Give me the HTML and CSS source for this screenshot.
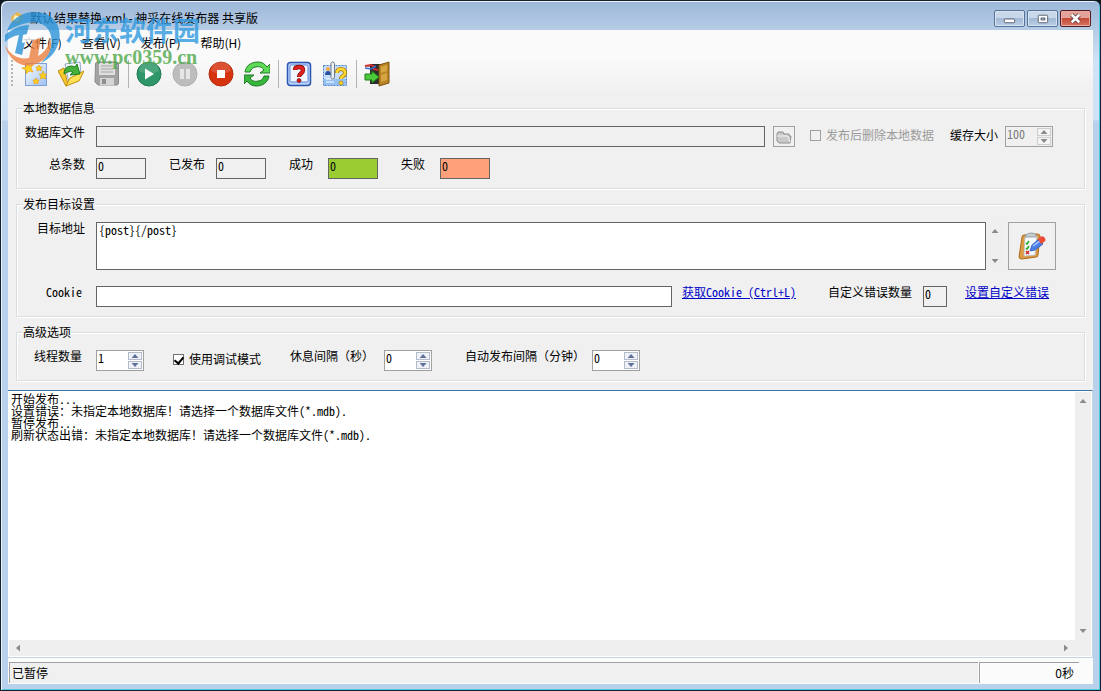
FILE: index.html
```html
<!DOCTYPE html>
<html lang="zh-CN">
<head>
<meta charset="UTF-8">
<meta name="viewport" content="width=device-width, initial-scale=1.0">
<title>默认结果替换.xml - 神采在线发布器 共享版</title>
<link rel="stylesheet" href="styles.css">
</head>
<body>

<div class="window">
    <header class="titlebar">
        <svg class="app-icon" viewBox="0 0 16 16"><path d="M1 7l6-5 7 4-5 8-7-2z" fill="#e8b64c"/><path d="M5 5l5 2-2 5-5-2z" fill="#fff3c0"/></svg>
        <h1>默认结果替换.xml - 神采在线发布器 共享版</h1>
        <div class="window-buttons">
            <button type="button" aria-label="最小化">
                <svg viewBox="0 0 30 16"><rect x="9.500" y="8.500" width="11" height="4" rx="1" fill="#fff" stroke="#555c6b"/></svg>
            </button>
            <button type="button" aria-label="最大化">
                <svg viewBox="0 0 30 16"><rect x="10.500" y="4.500" width="10" height="8" rx="1" fill="#fff" stroke="#555c6b"/><rect x="13.500" y="7.500" width="4" height="2" fill="#a9bfd9" stroke="#555c6b"/></svg>
            </button>
            <button type="button" class="close" aria-label="关闭">
                <svg viewBox="0 0 30 16"><path d="M11 4l8 8M19 4l-8 8" stroke="#5c3b45" stroke-width="4.600"/><path d="M11 4l8 8M19 4l-8 8" stroke="#fff" stroke-width="2.800"/></svg>
            </button>
        </div>
    </header>

    <div class="client">
        <nav class="menu">
            <button type="button">文件(F)</button>
            <button type="button">查看(V)</button>
            <button type="button">发布(P)</button>
            <button type="button">帮助(H)</button>
        </nav>

        <div class="toolbar">
            <span class="grip"></span>
            <button type="button" aria-label="新建">
                <svg viewBox="0 0 26 26">
                    <defs><linearGradient id="page" x1="0" y1="0" x2="1" y2="1"><stop offset="0" stop-color="#fff"/><stop offset="1" stop-color="#9dc0f5"/></linearGradient></defs>
                    <rect x="3.500" y="2.500" width="21" height="22" fill="url(#page)" stroke="#7d9fd6"/>
                    <g fill="#ffcf1f" stroke="#e09a10" stroke-width=".6">
                        <path d="M5 2l2 3 4-1-2 3 2 4-4-1-3 3v-4L0 7l4-1z"/>
                        <path d="M17 4l1 2h2l-1 2v2l-2-1-2 1V8l-1-2h2z"/>
                        <path d="M21 10l1 3h3l-2 2 1 3-3-1-3 1 1-3-2-2h3z"/>
                        <path d="M14 17l1 2h2l-1 2v2l-2-1-2 1v-2l-1-2h2z"/>
                    </g>
                </svg>
            </button>
            <button type="button" aria-label="打开">
                <svg viewBox="0 0 26 26">
                    <path d="M7 3l15-2 1 13-12 8z" fill="#f4f8ff" stroke="#91a8c8"/>
                    <path d="M0 10l6-3 4 17-2 1z" fill="#f7c92d" stroke="#bd8a12"/>
                    <path d="M8 25l4-8 14-7-5 10z" fill="#ffe052" stroke="#c1900f"/>
                    <path d="M6 13c0-6 5-10 11-7l2-3 3 10-10 1 3-3c-4-1-6 0-9 2z" fill="#45b13b" stroke="#217d20"/>
                </svg>
            </button>
            <button type="button" aria-label="保存" disabled>
                <svg viewBox="0 0 26 26">
                    <path d="M1.500 3q0-2 2-2h19q2 0 2 2v19q0 2-2 2H4l-3-3z" fill="#a3a3a3" stroke="#8b8b8b"/>
                    <rect x="5" y="2" width="16" height="12" fill="#dfdfdf"/>
                    <path d="M7 5h12M7 8h12M7 11h12" stroke="#a5a5a5"/>
                    <rect x="6" y="17" width="14" height="7" fill="#d5d5d5"/>
                    <rect x="8" y="18" width="4" height="5" fill="#8f8f8f"/>
                </svg>
            </button>
            <span class="separator"></span>
            <button type="button" aria-label="开始">
                <svg viewBox="0 0 26 26"><circle cx="13" cy="13" r="12" fill="#2e9668" stroke="#227a53"/><path d="M3 10a10 10 0 0 1 20 0q-10 5-20 0z" fill="#fff" opacity=".15"/><path d="M9 7.500v11l9-5.500z" fill="#fff"/></svg>
            </button>
            <button type="button" aria-label="暂停" disabled>
                <svg viewBox="0 0 26 26"><circle cx="13" cy="13" r="12" fill="#bdbdbd" stroke="#b0b0b0"/><path d="M8 8h4v10H8zM14 8h4v10h-4z" fill="#e6e6e6"/></svg>
            </button>
            <button type="button" aria-label="停止">
                <svg viewBox="0 0 26 26"><circle cx="13" cy="13" r="12" fill="#d6330f" stroke="#b52a0c"/><path d="M3 10a10 10 0 0 1 20 0q-10 5-20 0z" fill="#fff" opacity=".15"/><rect x="9" y="9" width="8" height="8" fill="#fff"/></svg>
            </button>
            <button type="button" aria-label="刷新">
                <svg viewBox="0 0 26 26">
                    <path d="M1 11C2 4 8 1 14 1c4 0 7 2 9 5l3-3v9H16l4-3c-2-3-5-4-8-3-3 0-5 2-6 5z" fill="#5edb56" stroke="#1d7a24"/>
                    <path d="M25 15c-1 7-7 10-13 10-4 0-7-2-9-5l-3 3v-9h10l-4 3c2 3 5 4 8 3 3 0 5-2 6-5z" fill="#38b53c" stroke="#1d7a24"/>
                </svg>
            </button>
            <span class="separator"></span>
            <button type="button" aria-label="帮助">
                <svg viewBox="0 0 26 26">
                    <rect x="1.500" y="1.500" width="23" height="23" rx="3" fill="#b9d2fa" stroke="#2a55b0" stroke-width="1.500"/>
                    <rect x="4" y="4" width="18" height="17" rx="1" fill="#f2f7ff" stroke="#5f8ad8"/>
                    <path d="M9 9q0-3 4-3t4 3q0 2-2 3.500T13 16" fill="none" stroke="#7a0d0d" stroke-width="4.400"/>
                    <path d="M9 9q0-3 4-3t4 3q0 2-2 3.500T13 16" fill="none" stroke="#df2020" stroke-width="3"/>
                    <circle cx="13" cy="19.500" r="2" fill="#d31818" stroke="#7a0d0d" stroke-width=".7"/>
                </svg>
            </button>
            <button type="button" aria-label="关于">
                <svg viewBox="0 0 26 26">
                    <rect x="1.500" y="4.500" width="23" height="20" fill="#c3ddfb" stroke="#4f83c8" stroke-dasharray="2 1"/>
                    <path d="M2 18h22v6H2z" fill="#94c0f2"/>
                    <circle cx="6" cy="8" r="2" fill="#efa944"/><path d="M3 14q0-4 3-4t3 4z" fill="#2851a4"/>
                    <path d="M4 18h8M4 21h8" stroke="#fff"/>
                    <rect x="9" y="1" width="3.500" height="17" rx="1.700" fill="#eef2f6" stroke="#68788c"/>
                    <path d="M15 12q0-4 4-4t4 4q0 2-2 3t-2 3" fill="none" stroke="#a57808" stroke-width="4"/>
                    <path d="M15 12q0-4 4-4t4 4q0 2-2 3t-2 3" fill="none" stroke="#ffd52e" stroke-width="2.600"/>
                    <circle cx="19" cy="22" r="2" fill="#ffd52e" stroke="#a57808" stroke-width=".7"/>
                </svg>
            </button>
            <span class="separator"></span>
            <button type="button" aria-label="退出">
                <svg viewBox="0 0 26 26">
                    <path d="M6 3h12v20H6z" fill="#2b2b2b"/>
                    <path d="M1 5l6-1 4 2M9 8l5 1" stroke="#d23131" stroke-width="2"/><path d="M1 7l6 1 5-3" stroke="#3d6fd0" stroke-width="1.500" fill="none"/>
                    <path d="M15 4l10-3v21l-10 3z" fill="#b88424" stroke="#7d5510"/>
                    <path d="M17 6l6-2v6l-6 2zM17 14l6-2v7l-6 2z" fill="#d6a541"/>
                    <path d="M1 13h7v-3l7 6-7 6v-3H1z" fill="#4fc93c" stroke="#1e7c1a"/>
                </svg>
            </button>
        </div>

        <main>
            <fieldset>
                <legend>本地数据信息</legend>
                <div class="row database-row">
                    <label class="caption" for="dbfile">数据库文件</label>
                    <input type="text" class="field grow" id="dbfile" readonly>
                    <button type="button" class="browse" aria-label="浏览" disabled>
                        <svg viewBox="0 0 16 14"><path d="M1 4l1-2h5l1 2h5v2h2l-1 7H3L1 11z" fill="#c9c9c9" stroke="#8f8f8f"/><path d="M1 6h11l2 6" fill="none" stroke="#f5f5f5"/></svg>
                    </button>
                    <label class="check delete-after disabled"><input type="checkbox" disabled>发布后删除本地数据</label>
                    <label class="cache" for="cache">缓存大小</label>
                    <div class="spinner disabled">
                        <input type="text" id="cache" value="100" disabled>
                        <span class="arrows"><button type="button" class="up" aria-label="增加" disabled></button><button type="button" class="down" aria-label="减少" disabled></button></span>
                    </div>
                </div>
                <div class="row counters">
                    <label class="caption" for="total">总条数</label>
                    <input type="text" class="field count" id="total" value="0" readonly>
                    <label for="published">已发布</label>
                    <input type="text" class="field count" id="published" value="0" readonly>
                    <label class="short" for="success">成功</label>
                    <input type="text" class="field count success" id="success" value="0" readonly>
                    <label class="short" for="failed">失败</label>
                    <input type="text" class="field count failed" id="failed" value="0" readonly>
                </div>
            </fieldset>

            <fieldset>
                <legend>发布目标设置</legend>
                <div class="row">
                    <label class="caption" for="target">目标地址</label>
                    <textarea class="target grow" id="target">{post}{/post}</textarea>
                    <div class="scroll vertical"><i class="up"></i><i class="down"></i></div>
                    <button type="button" class="edit" aria-label="编辑目标">
                        <svg viewBox="0 0 28 28">
                            <path d="M4 5q0-2 2-2l13-1q3 0 3 2l-2 19q0 2-2 2L4 27q-3 0-3-2z" fill="#dc9a45" stroke="#ab6b1d"/>
                            <path d="M7 5l12-1-2 19-11 1z" fill="#f5f9fc" stroke="#b9c4cc" stroke-width=".8"/>
                            <path d="M7 4q2-3 6-3t5 2v2H7z" fill="#c4ccd2" stroke="#8d979e" stroke-width=".8"/>
                            <path d="M8 11l1 1 2-3M8 16l1 1 2-3" stroke="#26a926" stroke-width="1.500" fill="none"/>
                            <path d="M8 19l3 3M11 19l-3 3" stroke="#d32424" stroke-width="1.500"/>
                            <path d="M12 19l2-6 7-6 4 5-8 6z" fill="#4c7ee8" stroke="#2c54b8" stroke-width=".8"/>
                            <path d="M15 14l7-5" stroke="#b0cbff" stroke-width="1.500"/>
                            <path d="M20 7q3-4 6-2 3 3 0 5l-3 2z" fill="#ec4b35"/>
                        </svg>
                    </button>
                </div>
                <div class="row cookie-row">
                    <label class="caption cookie-caption" for="cookie">Cookie</label>
                    <input type="text" class="field grow" id="cookie">
                    <a class="get-cookie" href="#">获取Cookie (Ctrl+L)</a>
                    <label class="error-label" for="errors">自定义错误数量</label>
                    <input type="text" class="field errors" id="errors" value="0" readonly>
                    <a class="set-errors" href="#">设置自定义错误</a>
                </div>
            </fieldset>

            <fieldset>
                <legend>高级选项</legend>
                <div class="row">
                    <label class="caption threads-caption" for="threads">线程数量</label>
                    <div class="spinner">
                        <input type="text" id="threads" value="1">
                        <span class="arrows"><button type="button" class="up" aria-label="增加"></button><button type="button" class="down" aria-label="减少"></button></span>
                    </div>
                    <label class="check debug"><input type="checkbox" checked>使用调试模式</label>
                    <label class="rest-label" for="rest">休息间隔（秒）</label>
                    <div class="spinner">
                        <input type="text" id="rest" value="0">
                        <span class="arrows"><button type="button" class="up" aria-label="增加"></button><button type="button" class="down" aria-label="减少"></button></span>
                    </div>
                    <label class="auto-label" for="auto">自动发布间隔（分钟）</label>
                    <div class="spinner">
                        <input type="text" id="auto" value="0">
                        <span class="arrows"><button type="button" class="up" aria-label="增加"></button><button type="button" class="down" aria-label="减少"></button></span>
                    </div>
                </div>
            </fieldset>
        </main>

        <section class="log">
            <textarea aria-label="日志" readonly>开始发布...
设置错误：未指定本地数据库！请选择一个数据库文件(*.mdb).
暂停发布...
刷新状态出错：未指定本地数据库！请选择一个数据库文件(*.mdb).</textarea>
            <div class="scroll vertical"><i class="up"></i><i class="down"></i></div>
            <div class="scroll horizontal"><i class="left"></i><i class="right"></i></div>
            <div class="scroll"></div>
        </section>

        <footer class="status">
            <span class="state">已暂停</span>
            <span class="elapsed">0秒</span>
        </footer>
    </div>

    <div class="watermark">
        <svg viewBox="0 0 56 56">
            <path d="M2 20C6 6 22-2 38 2c12 3 19 15 16 28-2 10-9 18-18 22 8-8 12-18 10-27C44 14 33 9 22 12 13 14 6 18 2 20z" fill="#2a93d8"/>
            <path d="M0 24c7-6 16-10 24-10l-7 30-7-2 4-18C8 25 3 28 0 31z" fill="#2a93d8"/>
            <path d="M0 34c5 10 14 15 24 13l4-20 8-2-3 20c7-4 11-10 12-18 4 12-4 24-17 27C15 57 3 48 0 34z" fill="#ee8040"/>
            <path d="M18 24l20-5-2 8-19 5z" fill="#fff"/>
        </svg>
        <div class="watermark-text">
            <strong>河东软件园</strong>
            <span>www.pc0359.cn</span>
        </div>
    </div>
</div>

</body>
</html>
```
FILE: styles.css
```css
* {
    box-sizing: border-box;
}
body {
    margin: 0;
    background: #101820;
    color: #000;
    font: 12px/12px "Noto Sans CJK SC", sans-serif;
}
button, input, textarea {
    font: inherit;
    color: inherit;
    margin: 0;
    border-radius: 0;
}
button {
    padding: 0;
}

/* Window frame */
.window {
    position: relative;
    display: flex;
    flex-direction: column;
    height: 100vh;
    min-height: 560px;
    padding: 0 7px 6px;
    border: 1px solid #16202b;
    border-radius: 7px 7px 0 0;
    box-shadow: inset 1px 1px 0 #eaf3fc, inset -1px -1px 0 #4fc8e6;
    background: linear-gradient(#9cb7d8, #b7cde6 30px, #d0e2f6 60px, #cfe1f5 119px, #b9d1ea 120px);
}
.titlebar {
    display: flex;
    align-items: center;
    height: 29px;
    padding: 5px 2px 0;
}
.titlebar h1 {
    flex: 1;
    margin: 0 0 0 4px;
    font-size: 12px;
    font-weight: normal;
}
.app-icon {
    width: 16px;
    height: 16px;
}
.window-buttons {
    display: flex;
    gap: 2px;
}
.window-buttons button {
    width: 31px;
    height: 17px;
    border: 1px solid #587397;
    border-radius: 2px;
    background: linear-gradient(#c8d8ea 45%, #a3bad5 50%, #b9cee6);
    box-shadow: inset 0 0 0 1px #d6e3f1;
}
.window-buttons .close {
    border-color: #571a22;
    background: linear-gradient(#e3a398 45%, #c44a38 50%, #d87561);
    box-shadow: inset 0 0 0 1px #e6aca2;
}
.window-buttons svg {
    display: block;
    width: 100%;
    height: 100%;
}
.client {
    flex: 1;
    display: flex;
    flex-direction: column;
    min-height: 0;
    background: #f0f0f0;
}

/* Menu and toolbar */
.menu {
    display: flex;
    gap: 20px;
    height: 26px;
    padding-left: 15px;
    background: #fafafa;
}
.menu button {
    border: 0;
    background: none;
}
.toolbar {
    display: flex;
    align-items: center;
    height: 37px;
    padding-bottom: 2px;
    background: linear-gradient(#fbfbfb, #f0f0f0);
}
.toolbar button {
    width: 36px;
    border: 0;
    background: none;
}
.toolbar svg {
    display: block;
    width: 26px;
    height: 26px;
    margin: 0 auto;
}
.grip {
    width: 2px;
    height: 28px;
    margin: 0 4px 0 3px;
    background: repeating-linear-gradient(#b5b5b5 0 2px, transparent 2px 4px);
}
.separator {
    width: 1px;
    height: 28px;
    margin: 0 2px 0 3px;
    background: #b4b4b4;
}

/* Settings */
main {
    display: flex;
    flex-direction: column;
    gap: 9px;
    padding: 9px 8px;
}
/* half-width latin keeps 6px columns next to 12px characters */
main, .log {
    font-feature-settings: "hwid";
}
main input, main textarea, .log textarea {
    font-feature-settings: inherit;
}
fieldset {
    min-width: 0;
    margin: 0;
    padding: 12px 28px 9px 0;
    border: 1px solid #d8dde0;
    box-shadow: 1px 1px 0 #fff, inset 1px 1px 0 #fff;
}
legend {
    margin-left: 6px;
    padding: 0;
    background: #f0f0f0;
}
.row {
    display: flex;
    align-items: flex-start;
    white-space: nowrap;
}
.database-row {
    padding-right: 3px;
}
.counters {
    margin-top: 11px;
}
.cookie-row {
    margin-top: 16px;
}
.caption {
    flex: none;
    width: 79px;
    padding-right: 11px;
    text-align: right;
}
.cookie-caption, .threads-caption {
    padding-right: 14px;
}
.field {
    height: 21px;
    padding: 0 1px 7px;
    border: 1px solid #646464;
    background: #fff;
    outline: none;
}
.field:read-only {
    background: #f0f0f0;
}
.grow {
    flex: 1;
    min-width: 0;
}
.count {
    width: 50px;
    margin: 0 23px 0 11px;
}
.caption + .count {
    margin-left: 0;
}
.short + .count {
    margin-left: 15px;
}
.field.success {
    background: #9acd32;
}
.field.failed {
    background: #ffa07a;
}
.browse {
    display: flex;
    align-items: center;
    justify-content: center;
    width: 22px;
    height: 21px;
    margin-left: 8px;
    border: 1px solid #a0a0a0;
    background: #f0f0f0;
}
.browse svg {
    width: 16px;
    height: 14px;
}
.check {
    display: flex;
    align-items: center;
    gap: 5px;
    height: 18px;
}
.check input {
    display: grid;
    place-items: center;
    appearance: none;
    width: 11px;
    height: 11px;
    border: 1px solid #707070;
    background: #fff;
}
.check input:checked::after {
    content: "";
    width: 4px;
    height: 7px;
    margin-bottom: 2px;
    border: solid #000;
    border-width: 0 2px 2px 0;
    transform: rotate(40deg);
}
.check input:disabled {
    border-color: #a0a0a0;
    background: #f0f0f0;
}
.disabled {
    color: #9b9b9b;
}
.delete-after {
    margin: 0 16px 0 15px;
}
.debug {
    margin: 0 29px;
}
.cache {
    margin-right: 7px;
    line-height: 18px;
}
/* full-width brackets */
.rest-label, .auto-label {
    font-feature-settings: normal;
}
.rest-label {
    margin-right: 10px;
}
.auto-label {
    margin: 0 7px 0 33px;
}
.spinner {
    display: flex;
    width: 48px;
    height: 21px;
    padding: 1px;
    border: 1px solid #a0a0a0;
    background: #fff;
}
.spinner input {
    flex: 1;
    min-width: 0;
    padding: 0 0 6px;
    border: 0;
    background: none;
    outline: none;
}
.spinner.disabled {
    background: #f0f0f0;
}
.spinner.disabled input {
    color: #7a7a7a;
}
.arrows {
    display: flex;
    flex-direction: column;
    gap: 1px;
    width: 14px;
}
.arrows button {
    flex: 1;
    display: flex;
    align-items: center;
    justify-content: center;
    border: 1px solid #b4bccb;
    background: #eef1f6;
}
.arrows button::after, .scroll i {
    content: "";
    width: 7px;
    height: 4px;
    background: #5e719b;
    clip-path: polygon(50% 0, 100% 100%, 0 100%);
}
.arrows .down::after, .scroll .down {
    clip-path: polygon(0 0, 100% 0, 50% 100%);
}
.disabled .arrows button {
    border-color: #cdcdcd;
    background: #f4f4f4;
}
.disabled .arrows button::after, .scroll i {
    background: #8a8a8a;
}
.target {
    height: 48px;
    padding: 1px 2px;
    border: 1px solid #646464;
    resize: none;
    outline: none;
}
.scroll {
    display: flex;
    align-items: center;
    justify-content: space-between;
    background: #efefef;
}
.scroll.vertical {
    flex-direction: column;
    align-self: stretch;
    width: 16px;
    padding: 7px 0;
}
.scroll.horizontal {
    height: 16px;
    padding: 0 7px;
}
.scroll .left, .scroll .right {
    width: 4px;
    height: 7px;
    clip-path: polygon(0 50%, 100% 0, 100% 100%);
}
.scroll .right {
    clip-path: polygon(0 0, 100% 50%, 0 100%);
}
.target + .scroll {
    margin: 0 5px 0 1px;
}
.edit {
    display: flex;
    align-items: center;
    justify-content: center;
    width: 48px;
    height: 48px;
    border: 1px solid #a0a0a0;
    background: #f0f0f0;
}
.edit svg {
    width: 28px;
    height: 28px;
}
a {
    color: #0000c8;
}
.get-cookie {
    margin: 0 32px 0 10px;
}
.errors {
    width: 24px;
    margin: 0 18px 0 11px;
}
.set-errors {
    margin-right: 7px;
}

/* Log */
.log {
    flex: 1;
    display: grid;
    grid-template: 1fr 16px / 1fr 16px;
    min-height: 60px;
    padding: 1px;
    border: solid #c3d4e6;
    border-width: 0 1px 1px 0;
    border-top: 1px solid #3f75a8;
    background: #fff;
}
.log textarea {
    padding: 1px 2px;
    border: 0;
    resize: none;
    outline: none;
    overflow: hidden;
}

/* Status bar */
.status {
    display: flex;
    height: 26px;
    padding: 4px 14px 1px 1px;
    background: #fbfbfb;
    line-height: 19px;
}
.status span {
    border: solid #a0a0a0;
    border-width: 1px 0 0 1px;
}
.state {
    flex: 1;
    padding-left: 2px;
    background: #f0f0f0;
}
.elapsed {
    width: 100px;
    margin-left: 1px;
    padding-right: 5px;
    text-align: right;
}

/* Site mark over the top left corner */
.watermark {
    position: absolute;
    top: 10px;
    left: 4px;
    display: flex;
    gap: 4px;
    opacity: .8;
    pointer-events: none;
}
.watermark svg {
    width: 56px;
    height: 56px;
}
.watermark-text {
    display: flex;
    flex-direction: column;
    padding-top: 4px;
}
.watermark strong {
    color: #329be0;
    font-size: 27px;
    line-height: 30px;
}
.watermark span {
    color: #4ea84a;
    font: bold 20px/24px "Liberation Serif", serif;
}
```
